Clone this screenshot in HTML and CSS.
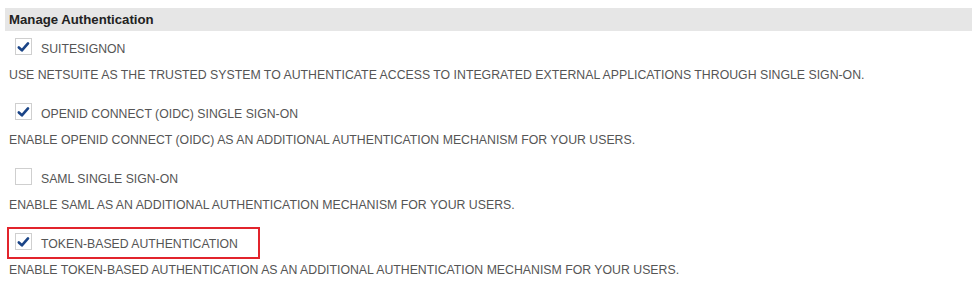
FILE: index.html
```html
<!DOCTYPE html>
<html lang="en">
  <head>
    <meta charset="UTF-8" />
    <title>Manage Authentication</title>
    <link rel="stylesheet" href="styles.css">
  </head>
  <body>
    <div class="section">
      <div class="section-header">Manage Authentication</div>

      <div class="option">
        <label class="option-row">
          <span class="check checked">
            <svg viewBox="0 0 16 16" width="16" height="16"><path d="M3 8.5 L6.3 11.5 L12.8 4.2" fill="none" stroke="#1a4487" stroke-width="2.8" stroke-linecap="round" stroke-linejoin="round"/></svg>
          </span>
          <span class="option-label">SUITESIGNON</span>
        </label>
        <div class="option-desc">USE NETSUITE AS THE TRUSTED SYSTEM TO AUTHENTICATE ACCESS TO INTEGRATED EXTERNAL APPLICATIONS THROUGH SINGLE SIGN-ON.</div>
      </div>

      <div class="option">
        <label class="option-row">
          <span class="check checked">
            <svg viewBox="0 0 16 16" width="16" height="16"><path d="M3 8.5 L6.3 11.5 L12.8 4.2" fill="none" stroke="#1a4487" stroke-width="2.8" stroke-linecap="round" stroke-linejoin="round"/></svg>
          </span>
          <span class="option-label">OPENID CONNECT (OIDC) SINGLE SIGN-ON</span>
        </label>
        <div class="option-desc">ENABLE OPENID CONNECT (OIDC) AS AN ADDITIONAL AUTHENTICATION MECHANISM FOR YOUR USERS.</div>
      </div>

      <div class="option">
        <label class="option-row">
          <span class="check"></span>
          <span class="option-label">SAML SINGLE SIGN-ON</span>
        </label>
        <div class="option-desc">ENABLE SAML AS AN ADDITIONAL AUTHENTICATION MECHANISM FOR YOUR USERS.</div>
      </div>

      <div class="option">
        <label class="option-row highlight">
          <span class="check checked">
            <svg viewBox="0 0 16 16" width="16" height="16"><path d="M3 8.5 L6.3 11.5 L12.8 4.2" fill="none" stroke="#1a4487" stroke-width="2.8" stroke-linecap="round" stroke-linejoin="round"/></svg>
          </span>
          <span class="option-label">TOKEN-BASED AUTHENTICATION</span>
        </label>
        <div class="option-desc">ENABLE TOKEN-BASED AUTHENTICATION AS AN ADDITIONAL AUTHENTICATION MECHANISM FOR YOUR USERS.</div>
      </div>
    </div>
  </body>
</html>
```

FILE: styles.css
```css
body {
  margin: 0;
  background-color: #ffffff;
  font-family: "Liberation Sans", Arial, sans-serif;
}

.section {
  padding: 8px 3px 0 5px;
}

.section-header {
  height: 23px;
  line-height: 23px;
  padding-left: 4px;
  background-color: #e6e6e6;
  font-size: 13.2px;
  font-weight: bold;
  color: #222222;
}

.option {
  padding-top: 1px;
  margin-bottom: 13px;
}

.option-row {
  display: inline-flex;
  align-items: center;
  height: 28px;
  margin-left: 2px;
  padding: 0 20px 0 6px;
  border: 2px solid transparent;
}

.option-row.highlight {
  border-color: #e2242c;
}

.check {
  width: 15px;
  height: 15px;
  border: 1px solid #cfcfcf;
  background-color: #ffffff;
  display: flex;
  align-items: center;
  justify-content: center;
  margin-right: 9px;
  margin-bottom: 3px;
}

.option-label {
  margin-top: 2px;
  font-size: 12.25px;
  color: #555555;
}

.option-desc {
  margin-top: 3px;
  padding-left: 4px;
  font-size: 12.3px;
  line-height: 16px;
  color: #555555;
}
```
